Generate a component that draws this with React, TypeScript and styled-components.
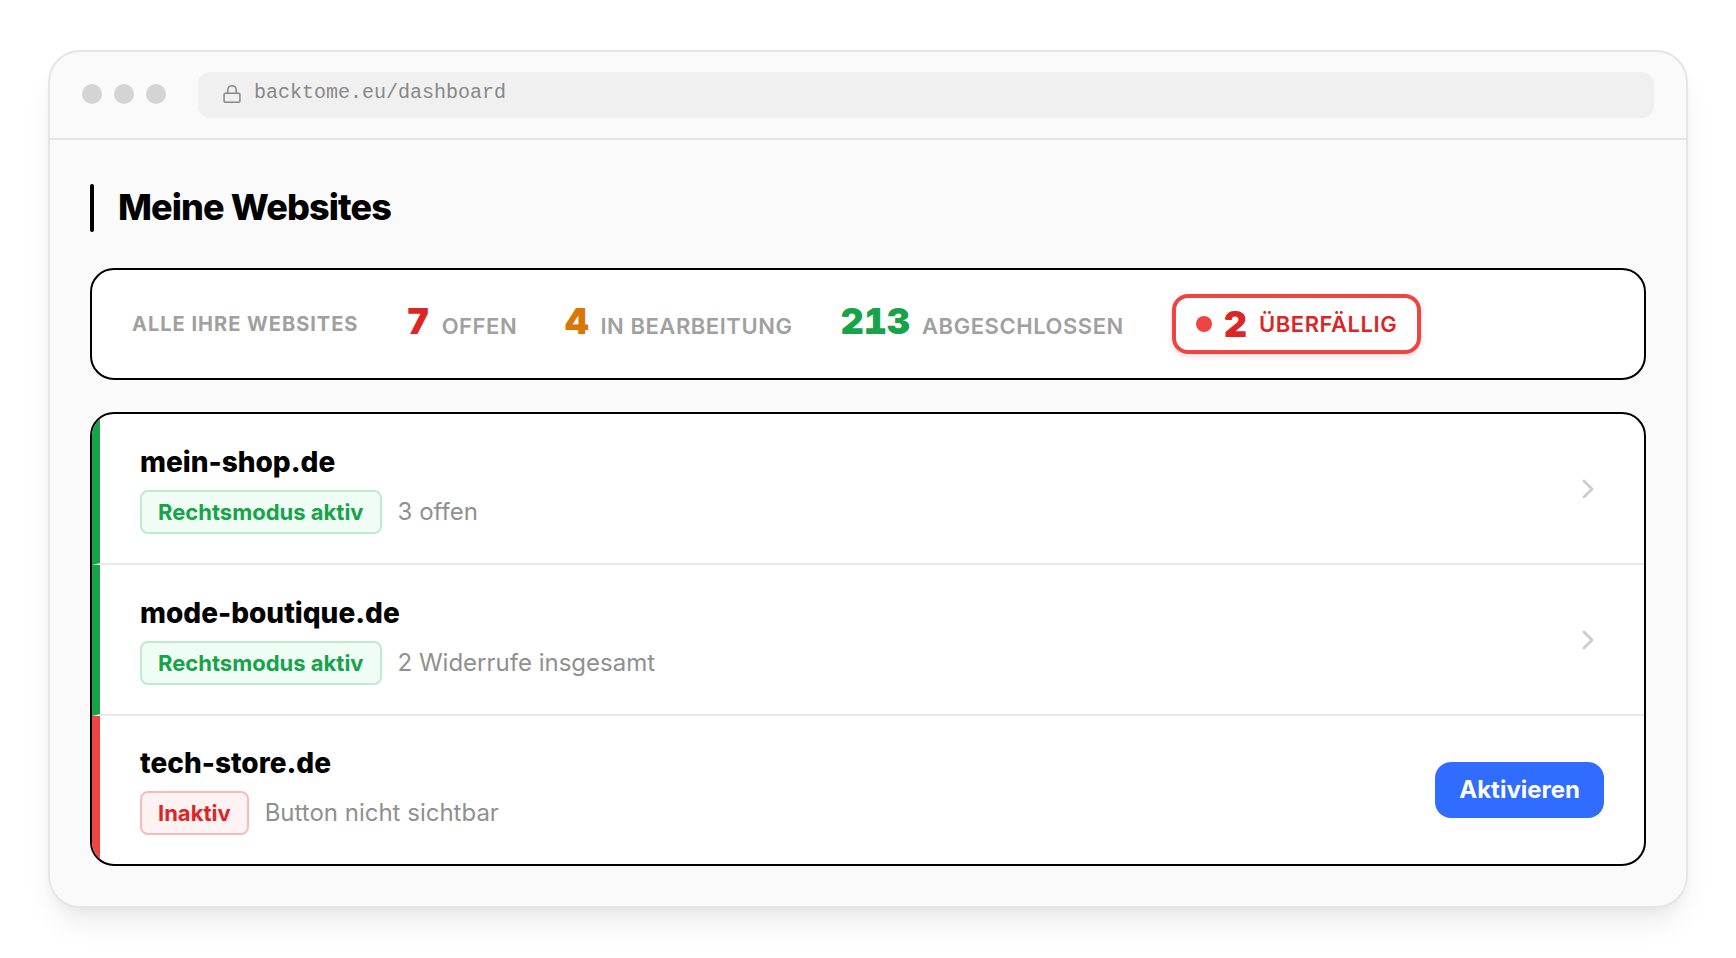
import React from "react";
import styled, { createGlobalStyle } from "styled-components";

const GlobalStyle = createGlobalStyle`
  *, *::before, *::after { box-sizing: border-box; }
  body {
    margin: 0;
    background: #fff;
    color: #000;
    font-family: Inter, "Liberation Sans", sans-serif;
  }
`;

const tones = {
  green: { text: "#16a34a", bar: "#16a34a", fill: "#f0fdf4", line: "#c0ead0" },
  red: { text: "#dc2626", bar: "#ef4444", fill: "#fef2f2", line: "#fababa" },
  amber: { text: "#d97706", bar: "#d97706", fill: "#fffbeb", line: "#fde68a" },
};
type Tone = keyof typeof tones;

const Page = styled.main`
  padding: 50px 48px;
`;

const Window = styled.section`
  overflow: hidden;
  background: #fafafa;
  border: 2px solid #e5e5e5;
  border-radius: 32px;
  box-shadow: 0 20px 30px -6px rgba(0, 0, 0, 0.08), 0 8px 12px -4px rgba(0, 0, 0, 0.04);
`;

const TopBar = styled.header`
  display: flex;
  align-items: center;
  gap: 32px;
  padding: 20px 32px;
  border-bottom: 2px solid #e5e5e5;
`;

const Dots = styled.div`
  display: flex;
  gap: 12px;
  padding-bottom: 2px;
`;

const Dot = styled.span`
  width: 20px;
  height: 20px;
  border-radius: 50%;
  background: #d4d4d4;
`;

const AddressBar = styled.div`
  flex: 1;
  display: flex;
  align-items: center;
  gap: 12px;
  height: 46px;
  padding: 0 24px 2px;
  border-radius: 12px;
  background: #f0f0f0;
  color: #888;
`;

const Address = styled.span`
  padding-bottom: 2px;
  font: 20px/24px "Liberation Mono", monospace;
`;

const Content = styled.div`
  display: flex;
  flex-direction: column;
  gap: 32px;
  padding: 40px;
`;

const Heading = styled.div`
  display: flex;
  align-items: center;
  gap: 24px;
  height: 56px;

  &::before {
    content: "";
    width: 4px;
    height: 48px;
    border-radius: 2px;
    background: #000;
  }
`;

const Title = styled.h1`
  margin: 0;
  padding-bottom: 2px;
  font-size: 36px;
  line-height: 44px;
  font-weight: 800;
  letter-spacing: -0.025em;
`;

const Card = styled.div`
  overflow: hidden;
  background: #fff;
  border: 2px solid #000;
  border-radius: 24px;
`;

const Stats = styled(Card)`
  display: flex;
  flex-wrap: wrap;
  align-items: center;
  gap: 24px 48px;
  padding: 24px 40px;
`;

const StatsTitle = styled.span`
  font-size: 20px;
  line-height: 26px;
  font-weight: 700;
  letter-spacing: 0.05em;
  color: #a0a0a0;
`;

const Stat = styled.div`
  display: flex;
  align-items: baseline;
  gap: 12px;
`;

const StatValue = styled.strong<{ $tone: Tone }>`
  font-size: 36px;
  line-height: 36px;
  font-weight: 900;
  font-variant-numeric: tabular-nums;
  color: ${(p) => tones[p.$tone].text};
`;

const StatLabel = styled.span<{ $tone?: Tone }>`
  font-size: 22px;
  line-height: 38px;
  font-weight: 600;
  letter-spacing: 0.025em;
  color: ${(p) => (p.$tone ? tones[p.$tone].text : "#a0a0a0")};
`;

const Overdue = styled.div`
  display: flex;
  align-items: center;
  gap: 12px;
  height: 60px;
  padding: 0 20px;
  border: 4px solid #ef4444;
  border-radius: 16px;
  box-shadow: 0 2px 6px rgba(239, 68, 68, 0.2);
`;

const OverdueDot = styled.span`
  width: 16px;
  height: 16px;
  border-radius: 50%;
  background: #ef4444;
`;

const SiteList = styled(Card).attrs({ as: "ul" })`
  margin: 0;
  padding: 0;
  list-style: none;
`;

const SiteRow = styled.li<{ $tone: Tone }>`
  display: flex;
  align-items: center;
  justify-content: space-between;
  min-height: 151px;
  padding: 0 40px;
  border-left: 8px solid ${(p) => tones[p.$tone].bar};
  border-bottom: 2px solid #e9e9e9;

  &:last-child {
    min-height: 148px;
    border-bottom: 0;
  }
`;

const SiteInfo = styled.div`
  display: flex;
  flex-direction: column;
  gap: 10px;
`;

const SiteName = styled.h2`
  margin: 0;
  font-size: 28px;
  line-height: 36px;
  font-weight: 800;
`;

const SiteMeta = styled.div`
  display: flex;
  align-items: center;
  gap: 16px;
`;

const Badge = styled.span<{ $tone: Tone }>`
  padding: 6px 16px;
  border: 2px solid ${(p) => tones[p.$tone].line};
  border-radius: 8px;
  background: ${(p) => tones[p.$tone].fill};
  color: ${(p) => tones[p.$tone].text};
  font-size: 22px;
  line-height: 28px;
  font-weight: 700;
`;

const Note = styled.span`
  font-size: 24px;
  line-height: 28px;
  color: #909090;
`;

const OpenLink = styled.a`
  display: flex;
  color: #ccc;
`;

const ActivateButton = styled.button`
  height: 56px;
  padding: 0 24px;
  border: 0;
  border-radius: 16px;
  background: #306cff;
  color: #fff;
  font: 700 24px/28px Inter, "Liberation Sans", sans-serif;
  cursor: pointer;
`;

const LockIcon = () => (
  <svg width="20" height="20" viewBox="0 0 24 24" fill="none" stroke="currentColor" strokeWidth="1.8" aria-hidden="true">
    <rect x="2.5" y="11" width="19" height="11" rx="1.5" />
    <path d="M7 11V7a5 5 0 0 1 10 0v4" />
  </svg>
);

const ChevronIcon = () => (
  <svg width="32" height="32" viewBox="0 0 24 24" fill="none" stroke="currentColor" strokeWidth="2.1" strokeLinecap="round" strokeLinejoin="round" aria-hidden="true">
    <path d="m9 18 6-6-6-6" />
  </svg>
);

const stats: { value: number; label: string; tone: Tone }[] = [
  { value: 7, label: "OFFEN", tone: "red" },
  { value: 4, label: "IN BEARBEITUNG", tone: "amber" },
  { value: 213, label: "ABGESCHLOSSEN", tone: "green" },
];

const sites: { name: string; badge: string; note: string; tone: Tone; active: boolean }[] = [
  { name: "mein-shop.de", badge: "Rechtsmodus aktiv", note: "3 offen", tone: "green", active: true },
  { name: "mode-boutique.de", badge: "Rechtsmodus aktiv", note: "2 Widerrufe insgesamt", tone: "green", active: true },
  { name: "tech-store.de", badge: "Inaktiv", note: "Button nicht sichtbar", tone: "red", active: false },
];

export default function App() {
  return (
    <>
      <GlobalStyle />
      <Page>
        <Window>
          <TopBar>
            <Dots>
              <Dot />
              <Dot />
              <Dot />
            </Dots>
            <AddressBar>
              <LockIcon />
              <Address>backtome.eu/dashboard</Address>
            </AddressBar>
          </TopBar>
          <Content>
            <Heading>
              <Title>Meine Websites</Title>
            </Heading>
            <Stats>
              <StatsTitle>ALLE IHRE WEBSITES</StatsTitle>
              {stats.map((s) => (
                <Stat key={s.label}>
                  <StatValue $tone={s.tone}>{s.value}</StatValue>
                  <StatLabel>{s.label}</StatLabel>
                </Stat>
              ))}
              <Overdue>
                <OverdueDot />
                <StatValue $tone="red">2</StatValue>
                <StatLabel $tone="red">ÜBERFÄLLIG</StatLabel>
              </Overdue>
            </Stats>
            <SiteList>
              {sites.map((s) => (
                <SiteRow key={s.name} $tone={s.tone}>
                  <SiteInfo>
                    <SiteName>{s.name}</SiteName>
                    <SiteMeta>
                      <Badge $tone={s.tone}>{s.badge}</Badge>
                      <Note>{s.note}</Note>
                    </SiteMeta>
                  </SiteInfo>
                  {s.active ? (
                    <OpenLink href="#" aria-label={s.name}>
                      <ChevronIcon />
                    </OpenLink>
                  ) : (
                    <ActivateButton type="button">Aktivieren</ActivateButton>
                  )}
                </SiteRow>
              ))}
            </SiteList>
          </Content>
        </Window>
      </Page>
    </>
  );
}
